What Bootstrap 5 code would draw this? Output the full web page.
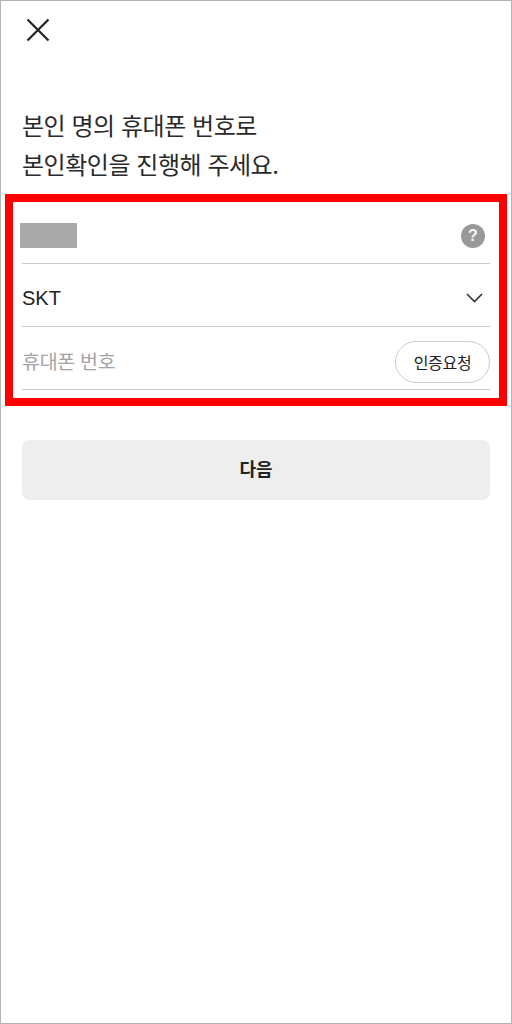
<!DOCTYPE html>
<html lang="ko">
<head>
<meta charset="utf-8">
<link href="https://cdn.jsdelivr.net/npm/bootstrap@5.3.0/dist/css/bootstrap.min.css" rel="stylesheet">
<style>
html, body { height: 1024px; overflow: hidden; }
body { font-family: "Noto Sans CJK KR", "Liberation Sans", sans-serif; background: #fff; color: #222; }
.frame { height: 1024px; border: 1px solid #b4b4b4; padding: 0 4px; }
.close-btn { height: 60px; padding: 0 0 2px 20px; }
.title { margin: 44px 0 0; padding-left: 17px; font-size: 24px; line-height: 39px; font-weight: 400; letter-spacing: -.47px; color: #2a2a2a; }
.redbox { margin-top: 11px; height: 212px; border: 8px solid #f00; padding: 0 9px; }
.field { height: 63px; padding-top: 6px; border-bottom: 1px solid #c9c9c9; }
.field:first-child { height: 62px; }
.masked { width: 57px; height: 25px; margin-left: -2px; background: #aaa; }
.help { width: 24px; height: 24px; background: #999; color: #f4f4f4; font: 700 16px/24px "Liberation Sans", sans-serif; margin-right: 5px; }
.skt { font: 400 20px "Liberation Sans", sans-serif; color: #222; }
.chev { margin-right: 7px; }
.ph { font-size: 19.5px; letter-spacing: -.3px; color: #a3a3a3; }
.req { height: 42px; width: 95px; margin-top: 2px; padding: 0; border: 1px solid #ccc; border-radius: 21px; background: #fff; color: #222; font-size: 16px; letter-spacing: -.3px; }
.next { margin: 34px 17px 0; width: 468px; height: 60px; padding: 0 0 4px; background: #eee; border: 0; border-radius: 8px; color: #222; font-size: 18px; font-weight: 700; }
</style>
</head>
<body>
<div class="frame">
  <div class="close-btn d-flex align-items-center">
    <svg width="26" height="26" viewBox="0 0 26 26" aria-label="닫기"><path d="M2.5 2.5 L23.5 23.5 M23.5 2.5 L2.5 23.5" stroke="#222" stroke-width="2.2" fill="none"/></svg>
  </div>
  <h1 class="title">본인 명의 휴대폰 번호로<br>본인확인을 진행해 주세요.</h1>
  <div class="redbox">
    <div class="field d-flex align-items-center justify-content-between">
      <div class="masked"></div>
      <div class="help rounded-circle text-center">?</div>
    </div>
    <div class="field d-flex align-items-center justify-content-between">
      <span class="skt">SKT</span>
      <svg class="chev" width="17" height="10" viewBox="0 0 17 10"><path d="M1 1 L8.5 8.5 L16 1" stroke="#333" stroke-width="1.6" fill="none"/></svg>
    </div>
    <div class="field d-flex align-items-center justify-content-between">
      <span class="ph">휴대폰 번호</span>
      <button class="btn req" type="button">인증요청</button>
    </div>
  </div>
  <button class="btn next d-block" type="button">다음</button>
</div>
<script src="https://cdn.jsdelivr.net/npm/bootstrap@5.3.0/dist/js/bootstrap.bundle.min.js"></script>
</body>
</html>
